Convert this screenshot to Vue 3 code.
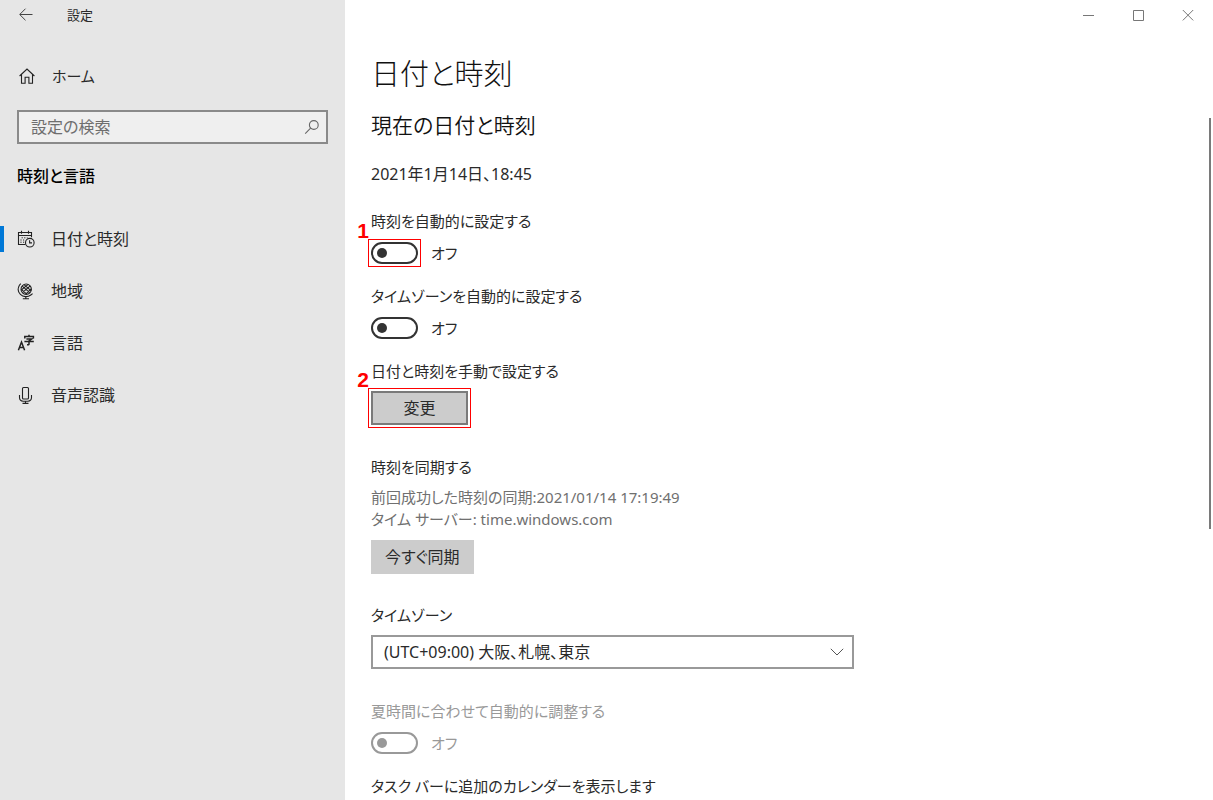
<template>
    <div class="window">
        <aside class="sidebar">
            <div class="title-bar">
                <button class="back" type="button" aria-label="戻る">
                    <svg width="16" height="16" viewBox="0 0 16 16">
                        <path d="M14.5 7.5H2M7.5 1.7 1.7 7.5l5.8 5.8" />
                    </svg>
                </button>
                <span class="app-name">設定</span>
            </div>

            <a class="home" href="#">
                <svg width="18" height="18" viewBox="0 0 18 18">
                    <path d="M1.6 9 9 2l7.4 7M3.5 7.6v8.7h3.6v-6h3.8v6h3.6V7.6" />
                </svg>
                <span>ホーム</span>
            </a>

            <div class="search">
                <input v-model="keyword" type="text" placeholder="設定の検索" aria-label="設定の検索" />
                <svg width="16" height="16" viewBox="0 0 16 16">
                    <circle cx="9.8" cy="6" r="4.4" />
                    <path d="M6.6 9.2 1.2 14.6" />
                </svg>
            </div>

            <h2 class="group">時刻と言語</h2>

            <nav class="nav">
                <a
                    v-for="item in items"
                    :key="item.id"
                    class="nav-item"
                    :class="{ active: item.id === current }"
                    href="#"
                    @click.prevent="current = item.id"
                >
                    <svg v-if="item.id === 'date'" width="18" height="18" viewBox="0 0 18 18">
                        <path d="M8.4 14.5H1.5V2.5h13v4.8M1.5 5.5h13M4.5.8v3M11.5.8v3" />
                        <path class="dots" d="M4.6 7.8h1.2M7.2 7.8h1.2M9.8 7.8h.8M3.4 10h1.2M6 10h1.2M3.4 12.2h1.2M6 12.2h1.2" />
                        <circle cx="12.8" cy="12.7" r="4.3" />
                        <path d="M12.6 10.2v2.7h2.4" />
                    </svg>
                    <svg v-else-if="item.id === 'region'" width="18" height="18" viewBox="0 0 18 18">
                        <circle cx="9.2" cy="7.2" r="5.2" />
                        <path d="M5.2 4.2 13 10.8M7 2.6l7 6M4.3 7.4l5.4 4.8M13.2 3.8 5.4 10.6M11.2 2.4 4.2 8M14.2 6.8l-5.4 5.4" />
                        <path d="M3.8 1.6 2.4 3.2C.6 6.4 1 10 3.4 12.4c2.8 2.8 7.4 3 10.4.6l1.8-1.4M8.8 14.6v2M5.8 16.8h6.2" />
                    </svg>
                    <svg v-else-if="item.id === 'language'" class="bold" width="18" height="18" viewBox="0 0 18 18">
                        <path d="M1.4 16.2 4.5 8l3.1 8.2M2.6 13.4h3.8" />
                        <path d="M12 .8v1.6M7.8 4.6V2.6h8.6v2M9.4 5h5.2L12 6.8v3.4q0 .8-2 .6M7.4 7.6h9.4" />
                    </svg>
                    <svg v-else width="18" height="18" viewBox="0 0 18 18">
                        <rect x="5.5" y="1.5" width="6" height="11.5" rx="1" />
                        <path d="M2.5 9v2.6q0 3.6 3.6 3.6h4.8q3.6 0 3.6-3.6V9M8.5 15.2v2M5.5 17.4h6" />
                    </svg>
                    <span>{{ item.label }}</span>
                </a>
            </nav>
        </aside>

        <main class="main">
            <div class="caption-buttons">
                <button type="button" aria-label="最小化">
                    <svg width="12" height="12" viewBox="0 0 12 12"><path d="M1 6.5h11" /></svg>
                </button>
                <button type="button" aria-label="最大化">
                    <svg width="12" height="12" viewBox="0 0 12 12"><path d="M1.5 1.5h10v10h-10z" /></svg>
                </button>
                <button type="button" aria-label="閉じる">
                    <svg width="12" height="12" viewBox="0 0 12 12"><path d="m.8 1 10.4 10.4M11.2 1 .8 11.4" /></svg>
                </button>
            </div>

            <div class="content">
                <h1>日付と時刻</h1>
                <h2>現在の日付と時刻</h2>
                <p class="now">2021年1月14日、18:45</p>

                <section class="setting">
                    <label for="auto-time">時刻を自動的に設定する</label>
                    <div class="toggle-row">
                        <span class="marked">
                            <input id="auto-time" v-model="autoTime" class="toggle" type="checkbox" />
                            <span class="frame"><b class="badge">1</b></span>
                        </span>
                        <span>{{ stateText(autoTime) }}</span>
                    </div>
                </section>

                <section class="setting">
                    <label for="auto-zone">タイムゾーンを自動的に設定する</label>
                    <div class="toggle-row">
                        <input id="auto-zone" v-model="autoZone" class="toggle" type="checkbox" />
                        <span>{{ stateText(autoZone) }}</span>
                    </div>
                </section>

                <section class="setting manual">
                    <h3 id="manual-title">日付と時刻を手動で設定する</h3>
                    <span class="marked">
                        <button class="btn focused" type="button" aria-describedby="manual-title">変更</button>
                        <span class="frame"><b class="badge">2</b></span>
                    </span>
                </section>

                <section class="setting sync">
                    <h3>時刻を同期する</h3>
                    <p class="info">
                        前回成功した時刻の同期:2021/01/14 17:19:49<br />
                        タイム サーバー: time.windows.com
                    </p>
                    <button class="btn" type="button">今すぐ同期</button>
                </section>

                <section class="setting zone">
                    <label for="zone">タイムゾーン</label>
                    <div class="select">
                        <select id="zone" v-model="zone">
                            <option value="tokyo">(UTC+09:00) 大阪、札幌、東京</option>
                        </select>
                        <svg width="14" height="8" viewBox="0 0 14 8"><path d="m.8.8 6.2 6.2L13.2.8" /></svg>
                    </div>
                </section>

                <section class="setting disabled">
                    <label for="dst">夏時間に合わせて自動的に調整する</label>
                    <div class="toggle-row">
                        <input id="dst" class="toggle" type="checkbox" disabled />
                        <span>オフ</span>
                    </div>
                </section>

                <section class="setting">
                    <h3>タスク バーに追加のカレンダーを表示します</h3>
                </section>
            </div>

            <div class="scroll-thumb" />
        </main>
    </div>
</template>

<script setup>
import { ref } from 'vue'

const items = [
    { id: 'date', label: '日付と時刻' },
    { id: 'region', label: '地域' },
    { id: 'language', label: '言語' },
    { id: 'speech', label: '音声認識' }
]

const current = ref('date')
const keyword = ref('')
const autoTime = ref(false)
const autoZone = ref(false)
const zone = ref('tokyo')

function stateText(on) {
    return on ? 'オン' : 'オフ'
}
</script>

<style>
body {
    margin: 0;
    overflow: hidden;
}
</style>

<style scoped>
.window {
    display: flex;
    height: 100vh;
    overflow: hidden;
    background: #fff;
    color: #2a2a2a;
    font-family: 'Noto Sans', 'Noto Sans CJK JP', sans-serif;
    font-size: 15px;
    font-weight: 400;
    line-height: 22px;
    font-feature-settings: 'palt';
}

h1,
h2,
h3,
p {
    margin: 0;
    font-size: 15px;
    font-weight: inherit;
}

button,
input,
select {
    box-sizing: border-box;
    margin: 0;
    color: inherit;
    font: inherit;
    font-feature-settings: inherit;
}

a {
    color: inherit;
    text-decoration: none;
}

svg {
    flex: none;
    fill: none;
    stroke: #222;
    stroke-width: 1.1;
}

/* sidebar */
.sidebar {
    flex: 0 0 345px;
    background: #e6e6e6;
}

.title-bar {
    display: flex;
    align-items: center;
    height: 30px;
    padding-left: 18px;
    font-size: 13px;
}

.back {
    display: flex;
    padding: 0;
    border: 0;
    background: none;
}

.back svg {
    stroke: #444;
    stroke-width: 1;
}

.app-name {
    margin-left: 33px;
}

.home {
    display: flex;
    align-items: center;
    gap: 16px;
    height: 32px;
    margin-top: 30px;
    padding-left: 18px;
}

.search {
    position: relative;
    margin: 18px 17px 0 17px;
}

.search input {
    display: block;
    width: 100%;
    height: 34px;
    padding: 0 36px 0 12px;
    border: 2px solid #8a8a8a;
    border-radius: 0;
    outline: 0;
    background: #efefef;
    font-size: 16px;
}

.search input::placeholder {
    color: #6e6e6e;
    opacity: 1;
}

.search svg {
    position: absolute;
    top: 9px;
    right: 8px;
    stroke: #666;
}

.group {
    margin: 21px 0 26px 17px;
    color: #000;
    font-size: 16px;
    font-weight: 500;
}

.nav-item {
    display: flex;
    align-items: center;
    gap: 16px;
    height: 52px;
    padding-left: 17px;
    font-size: 16px;
}

.nav-item.active {
    background: linear-gradient(#0078d7, #0078d7) left center / 4px 26px no-repeat;
}

.dots {
    stroke-width: 1;
}

.bold {
    stroke-width: 1.5;
}

/* right pane */
.main {
    position: relative;
    flex: 1;
    min-width: 0;
}

.caption-buttons {
    display: flex;
    justify-content: flex-end;
    height: 30px;
}

.caption-buttons button {
    display: flex;
    align-items: center;
    justify-content: center;
    width: 50px;
    padding: 0;
    border: 0;
    background: none;
}

.caption-buttons svg {
    stroke: #777;
    stroke-width: 1;
}

.content {
    padding: 24px 26px 0;
}

h1 {
    color: #111;
    font-size: 29px;
    font-weight: 300;
    line-height: 40px;
}

.content h2 {
    margin-top: 16px;
    color: #111;
    font-size: 21px;
    font-weight: 350;
    line-height: 30px;
}

.now {
    margin-top: 23px;
    font-size: 16px;
}

.setting {
    margin-top: 21px;
}

.now + .setting {
    margin-top: 25px;
}

.setting label {
    display: block;
}

.toggle-row {
    display: flex;
    align-items: center;
    gap: 13px;
    height: 22px;
    margin-top: 10px;
}

.toggle {
    display: block;
    position: relative;
    width: 47px;
    height: 22px;
    border: 2px solid #333;
    border-radius: 11px;
    appearance: none;
}

.toggle::before {
    content: '';
    position: absolute;
    top: 4px;
    left: 4px;
    width: 10px;
    height: 10px;
    border-radius: 50%;
    background: #333;
}

.toggle:checked::before {
    left: 29px;
}

.marked {
    display: inline-block;
    position: relative;
    vertical-align: top;
}

.frame {
    position: absolute;
    inset: -3px;
    border: 1px solid #f00;
    pointer-events: none;
}

.badge {
    position: absolute;
    right: 100%;
    bottom: 100%;
    margin-bottom: -2px;
    color: #f00;
    font: bold 21px/22px 'Liberation Sans', Arial, sans-serif;
}

.btn {
    display: block;
    min-width: 97px;
    height: 34px;
    padding: 0 14px;
    border: 0;
    background: #ccc;
    font-size: 16px;
}

.btn.focused {
    border: 2px solid #7a7a7a;
}

.manual .marked {
    margin-top: 9px;
}

.sync {
    margin-top: 31px;
}

.info {
    margin: 8px 0 10px;
    color: #707070;
}

.zone {
    margin-top: 30px;
}

.select {
    position: relative;
    max-width: 483px;
    margin-top: 9px;
}

.select select {
    display: block;
    width: 100%;
    height: 34px;
    padding: 0 36px 0 11px;
    border: 2px solid #999;
    border-radius: 0;
    background: #fff;
    font-size: 16px;
    appearance: none;
}

.select svg {
    position: absolute;
    top: 13px;
    right: 10px;
    stroke: #555;
    stroke-width: 1;
    pointer-events: none;
}

.zone + .setting {
    margin-top: 31px;
}

.disabled {
    color: #999;
}

.disabled .toggle {
    border-color: #999;
}

.disabled .toggle::before {
    background: #999;
}

.scroll-thumb {
    position: absolute;
    top: 118px;
    right: 2px;
    width: 2px;
    height: 411px;
    background: #7a7a7a;
}
</style>
